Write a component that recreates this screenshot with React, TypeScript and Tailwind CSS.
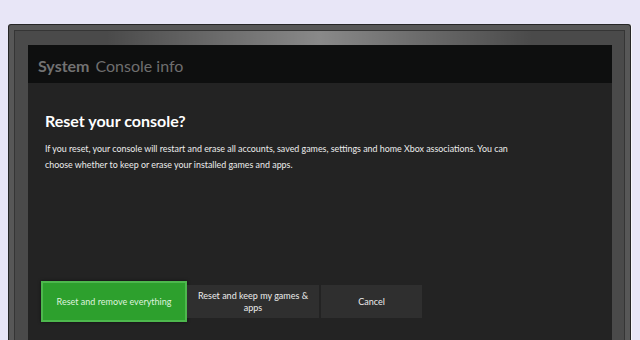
import React from "react";

const font = { fontFamily: "Lato, 'Open Sans', sans-serif" };

const ResetDialog: React.FC = () => {
  return (
    <div className="flex-1 flex flex-col bg-[#232323]">
      <div className="pl-[17px] pt-[28px]">
        <h1 className="text-[16px] leading-[20px] font-bold text-white">
          Reset your console?
        </h1>
        <p className="mt-[10px] w-[478px] text-[8.9px] leading-[16px] text-[#ededed]">
          If you reset, your console will restart and erase all accounts, saved
          games, settings and home Xbox associations. You can choose whether to
          keep or erase your installed games and apps.
        </p>
      </div>
      <div className="ml-[13px] mt-[108px] flex items-center">
        <button className="w-[146px] h-[41px] border-2 border-[#4db84d] bg-[#2da02d] text-[9px] text-[#dff3df] shadow-[0_0_3px_rgba(0,0,0,0.6)]">
          Reset and remove everything
        </button>
        <button className="w-[132px] h-[33px] px-[8px] bg-[#2f2f2f] text-[9px] leading-[12px] text-[#ececec]">
          Reset and keep my games &amp; apps
        </button>
        <button className="ml-[2px] w-[101px] h-[33px] bg-[#2f2f2f] text-[9px] text-[#ececec]">
          Cancel
        </button>
      </div>
    </div>
  );
}

export default function App() {
  return (
    <div
      style={font}
      className="w-[640px] h-[340px] overflow-hidden bg-[#e8e6f7] pt-[24px] pl-[8px] pr-[9px]"
    >
      {/* tv bezel */}
      <div className="h-full border border-b-0 border-[#262626] rounded-t-[3px] bg-[#575757] shadow-[1px_0_0_#f6f6fb] pt-[5px] px-[5px] flex">
        <div className="flex-1 border border-b-0 border-[#353535] [background:linear-gradient(90deg,transparent_15%,rgba(255,255,255,0.35)_50%,transparent_85%)_top/100%_14px_no-repeat,#4a4a4a] pt-[14px] pl-[13px] pr-[12px] flex">
          <div className="flex-1 flex flex-col">
            <div className="h-[38px] bg-[#0e0f0f] flex items-center pl-[10px] pt-[3px] text-[16px]">
              <span className="font-bold text-[#727272]">System</span>
              <span className="ml-[6px] text-[#6e6e6e]">Console info</span>
            </div>
            <ResetDialog />
          </div>
        </div>
      </div>
    </div>
  );
}
